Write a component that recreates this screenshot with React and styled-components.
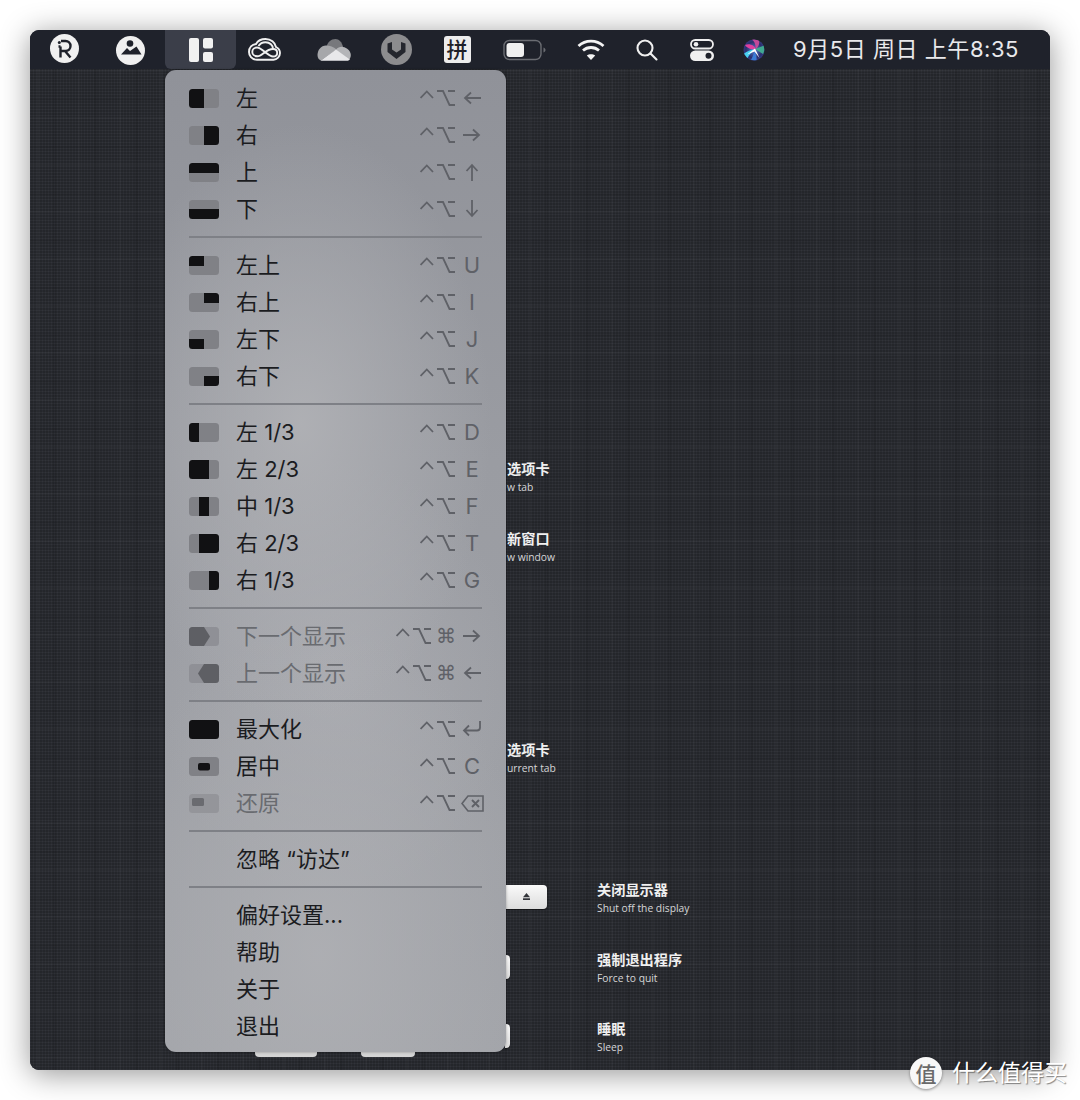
import styled, { createGlobalStyle } from "styled-components";

const GlobalStyle = createGlobalStyle`
  html, body { margin: 0; padding: 0; background: #fff; }
  * { box-sizing: border-box; }
`;

const UI_FONT = `Inter, "Noto Sans CJK SC", "Noto Sans", sans-serif`;

const Page = styled.div`
  position: relative;
  width: 1080px;
  height: 1100px;
  padding: 30px;
  background: #fff;
  font-family: ${UI_FONT};
  overflow: hidden;
`;

const Desktop = styled.div`
  display: flex;
  flex-direction: column;
  width: 1020px;
  height: 1040px;
  border-radius: 9px;
  background: #1f222b;
  box-shadow: 0 4px 30px rgba(0, 0, 0, 0.42);
`;

const Bar = styled.header`
  position: relative;
  z-index: 2;
  display: flex;
  align-items: center;
  flex: 0 0 39px;
  background: #1f222b;
  border-radius: 9px 9px 0 0;
`;

const Slot = styled.div`
  position: relative;
  display: flex;
  align-items: center;
  justify-content: center;
  flex: 0 0 ${(p) => p.$w}px;
  height: 39px;
  padding-right: ${(p) => p.$shift || 0}px;
  padding-top: ${(p) => (p.$dy > 0 ? p.$dy * 2 : 0)}px;
  padding-bottom: ${(p) => (p.$dy < 0 ? -p.$dy * 2 : 0)}px;
  ${(p) => p.$active && "background: #3b3e49; border-radius: 0 0 6px 6px;"}
`;

const Clock = styled.div`
  margin-left: 27px;
  font-size: 22px;
  line-height: 39px;
  letter-spacing: 0.55px;
  color: #e9e9ec;
  white-space: nowrap;
`;

const PinyinBadge = styled.div`
  display: flex;
  align-items: center;
  justify-content: center;
  width: 27px;
  height: 27px;
  border-radius: 3px;
  background: #ededed;
  color: #1e2027;
  font-size: 21px;
  font-weight: 500;
  line-height: 27px;
`;

const Menu = styled.nav`
  position: absolute;
  top: 40px;
  left: 0;
  width: 341px;
  height: 982px;
  padding-top: 9.5px;
  border-radius: 11px;
  background:
    radial-gradient(ellipse 190px 300px at 40% 36%, rgba(178, 179, 183, 0.85), rgba(178, 179, 183, 0) 100%),
    radial-gradient(ellipse 220px 330px at 45% 90%, rgba(176, 177, 181, 0.8), rgba(176, 177, 181, 0) 100%),
    radial-gradient(ellipse 180px 220px at 50% 62%, rgba(174, 175, 180, 0.7), rgba(174, 175, 180, 0) 100%),
    linear-gradient(180deg, #909299 0%, #9a9ca2 40%, #a2a4a9 100%);
  box-shadow: 0 0 3px rgba(0, 0, 0, 0.35);
`;

const Row = styled.div`
  display: flex;
  align-items: center;
  height: 37px;
  padding: 0 23px 0 24px;
  color: ${(p) => (p.$off ? "#696b70" : "#1b1c1f")};
  font-size: 22px;
`;

const IconCell = styled.div`
  display: flex;
  flex: 0 0 30px;
  margin-right: 17px;
`;

const Label = styled.span`
  flex: 1;
  line-height: 37px;
  white-space: nowrap;
`;

const Shortcut = styled.div`
  display: flex;
  align-items: center;
  color: #5f6167;
`;

const ModIcon = styled.svg`
  display: block;
  margin-right: ${(p) => (p.$cmd ? 5 : 3)}px;
`;

const CmdMark = styled.span`
  margin-right: 2px;
  font-family: "DejaVu Sans", sans-serif;
  font-size: 20px;
  line-height: 37px;
`;

const KeyCap = styled.span`
  display: flex;
  align-items: center;
  justify-content: center;
  width: 28px;
  height: 37px;
  margin-right: -3px;
  font-size: 22px;
  line-height: 37px;
`;

const Separator = styled.hr`
  height: 2px;
  margin: 8.5px 24px;
  border: 0;
  background: #7e8086;
`;

const WinSvg = styled.svg`
  display: block;
  width: 30px;
  height: 19px;
  border-radius: 3.5px;
  background: ${(p) => p.$bg};
`;

const Sheet = styled.main`
  display: flex;
  flex: 1;
  flex-direction: column;
  padding-top: 391px;
  border-radius: 0 0 9px 9px;
  background-color: #2a2c32;
  background-image:
    repeating-linear-gradient(90deg, transparent 0 7px, rgba(255, 255, 255, 0.02) 7px 9px, transparent 9px 23px, rgba(0, 0, 0, 0.07) 23px 26px, transparent 26px 41px),
    repeating-linear-gradient(0deg, transparent 0 11px, rgba(255, 255, 255, 0.018) 11px 13px, transparent 13px 29px, rgba(0, 0, 0, 0.06) 29px 31px, transparent 31px 47px),
    repeating-linear-gradient(0deg, rgba(255, 255, 255, 0.02) 0 1px, rgba(0, 0, 0, 0.08) 1px 3px),
    repeating-linear-gradient(90deg, rgba(255, 255, 255, 0.015) 0 1px, rgba(0, 0, 0, 0.08) 1px 3px);
`;

const Hint = styled.div`
  display: flex;
  align-items: center;
  margin-top: ${(p) => p.$top || 0}px;
  padding-left: 475px;
`;

const KeySlot = styled.div`
  flex: 0 0 92px;
`;

const FnKey = styled.div`
  display: flex;
  align-items: center;
  justify-content: center;
  width: ${(p) => p.$w}px;
  height: 24px;
  margin-bottom: 5px;
  border-radius: 0 4px 4px 0;
  background: linear-gradient(180deg, #fafafa, #dcdcdc);
  box-shadow: 0 1px 1px rgba(0, 0, 0, 0.5);
`;

const HintText = styled.div`
  padding-left: ${(p) => p.$inset || 0}px;
  color: #f0f0f0;
`;

const HintTitle = styled.div`
  font-size: 14.2px;
  font-weight: 700;
  line-height: 18px;
  white-space: nowrap;
`;

const HintSub = styled.div`
  font-family: "Open Sans", sans-serif;
  font-size: 10.3px;
  line-height: 18px;
  color: #d6d6d8;
  white-space: nowrap;
`;

const TipRow = styled.div`
  display: flex;
  gap: 44px;
  margin-top: -4px;
  padding-left: 225px;
`;

const KeyTip = styled.div`
  width: ${(p) => p.$w}px;
  height: 5px;
  border-radius: 0 0 4px 4px;
  background: #d4d4d4;
`;

const Watermark = styled.div`
  position: absolute;
  left: 910px;
  top: 1057px;
  display: flex;
  align-items: center;
  gap: 10px;
`;

const WatermarkBadge = styled.div`
  display: flex;
  align-items: center;
  justify-content: center;
  width: 32px;
  height: 32px;
  border-radius: 50%;
  background: #f8f8f8;
  color: #6a6a6a;
  font-size: 21px;
  font-weight: 500;
  box-shadow: 0 1px 3px rgba(0, 0, 0, 0.4);
`;

const WatermarkText = styled.span`
  color: #fff;
  font-size: 23px;
  line-height: 32px;
  white-space: nowrap;
  text-shadow: 1px 1px 1px rgba(0, 0, 0, 0.45);
`;

/* ---- menu bar icons ---- */

const RectanglyIcon = () => (
  <svg width="29" height="29" viewBox="0 0 29 29">
    <circle cx="14.5" cy="14.5" r="14.5" fill="#f0f0f0" />
    <path d="M10.5 12.500V23.500M8.500 12.500H10.500M11 7H15.500A5 5 0 0 1 15.500 17H10.500M15 17L20.500 23.500" fill="none" stroke="#1f222b" strokeWidth="2.400" />
    <circle cx="9.300" cy="8.500" r="1.500" fill="#1f222b" />
  </svg>
);

const PhotoIcon = () => (
  <svg width="29" height="29" viewBox="0 0 29 29">
    <circle cx="14.5" cy="14.5" r="14.5" fill="#f0f0f0" />
    <circle cx="14" cy="7.500" r="3.300" fill="#1f222b" />
    <path d="M5 18.500L11 12L14 15L20.500 10.500L25.500 18.500Z" fill="#1f222b" />
  </svg>
);

const LayoutIcon = () => (
  <svg width="24" height="24" viewBox="0 0 24 24">
    <rect x="0" y="0" width="10" height="24" rx="2" fill="#f1f1f1" />
    <rect x="14" y="0" width="10" height="10.5" rx="2" fill="#f1f1f1" />
    <rect x="14" y="14" width="10" height="10" rx="2" fill="#f1f1f1" />
  </svg>
);

const CloudLoopIcon = () => (
  <svg width="33" height="23" viewBox="0 0 33 23" fill="none" stroke="#f0f0f0" strokeWidth="1.900">
    <path d="M9 21.800C3.500 21.800 1 17.500 1 14C1 9.500 4 6.500 8 6C10 2.500 13.500 1 17.500 1C23 1 27 4.500 28 9C31 10.500 32 13 32 15C32 18.500 29 21.800 25.500 21.800Z" />
    <path d="M9.500 18.300C14 18.300 18 11 25 11C28 11 29.200 13 29.200 15C29.200 17 27.500 18.500 25 18.500C20 18.500 14 9.500 9 9.500C6.500 9.500 4.300 11.500 4.300 14C4.300 16.500 6.500 18.300 9.500 18.300Z" />
    <path d="M10.500 8C12 5.500 14.500 4.200 17.500 4.200C22 4.200 25 7.500 25 11" />
  </svg>
);

const OneDriveIcon = () => (
  <svg width="34" height="22" viewBox="0 0 34 22">
    <path d="M9 9C10.500 3 14 0 18.500 0C22 0 25 3 26 8L19 12Z" fill="#77787c" />
    <path d="M0.500 16C0.500 11 4 6.500 9 6.500C13 6.500 16.500 8 19.500 10.500L4 21.500C2 21 0.500 19 0.500 16Z" fill="#a6a7aa" />
    <path d="M19 10.500C21 8.500 23.500 7.500 26 8C30 8.500 33.800 12 33.800 16C33.800 18 33 19.800 32 21L25 18Z" fill="#b4b5b8" />
    <path d="M3.500 21.800L19 10.500L32.800 20.500C32 21.500 31 21.800 30 21.800Z" fill="#e8e8ea" />
  </svg>
);

const ShieldIcon = () => (
  <svg width="31" height="31" viewBox="0 0 31 31">
    <circle cx="15.500" cy="15.500" r="15.500" fill="#8c8c8e" />
    <path d="M6.500 9.500L11 8V15.500L15.500 18.500L20 15.500V8L24.500 9.500V18L15.500 25L6.500 18Z" fill="#24262d" />
  </svg>
);

const BatteryIcon = () => (
  <svg width="43" height="22" viewBox="0 0 43 22">
    <rect x="1" y="1.500" width="37" height="19" rx="5.500" fill="none" stroke="#6a6c72" strokeWidth="1.400" />
    <rect x="3.500" y="4" width="17.500" height="14" rx="3" fill="#f0f0f0" />
    <path d="M40.500 8.500C42 9.300 42.500 10 42.500 11C42.500 12 42 12.700 40.500 13.500Z" fill="#6a6c72" />
  </svg>
);

const WifiIcon = () => (
  <svg width="28" height="21" viewBox="0 0 28 21" fill="none" stroke="#f4f4f4" strokeWidth="2.800">
    <path d="M1.500 7C8.500 0.500 19.500 0.500 26.500 7" />
    <path d="M6 11.500C10.500 7.500 17.500 7.500 22 11.500" />
    <path d="M14 21L9.800 16.500C12 14.800 16 14.800 18.200 16.500Z" fill="#f4f4f4" stroke="none" />
  </svg>
);

const SearchIcon = () => (
  <svg width="22" height="22" viewBox="0 0 22 22" fill="none" stroke="#f0f0f0" strokeWidth="2.100" strokeLinecap="round">
    <circle cx="9" cy="9" r="7.500" />
    <path d="M14.500 14.500L20.500 20.500" />
  </svg>
);

const ControlIcon = () => (
  <svg width="24" height="22" viewBox="0 0 24 22">
    <rect x="1" y="1" width="22" height="8.500" rx="4.250" fill="none" stroke="#f0f0f0" strokeWidth="1.800" />
    <circle cx="6" cy="5.250" r="2.300" fill="#f0f0f0" />
    <rect x="0" y="11.500" width="24" height="10.500" rx="5.250" fill="#f0f0f0" />
    <circle cx="18.500" cy="16.750" r="3" fill="#1f222b" />
  </svg>
);

const SiriIcon = () => (
  <svg width="22" height="22" viewBox="0 0 22 22">
    <defs>
      <radialGradient id="siriBase" cx="50%" cy="50%" r="55%">
        <stop offset="0%" stopColor="#5d7fd0" />
        <stop offset="70%" stopColor="#2b2f6e" />
        <stop offset="100%" stopColor="#3a3f8a" />
      </radialGradient>
      <filter id="siriSoft">
        <feGaussianBlur stdDeviation="0.6" />
      </filter>
      <clipPath id="siriClip">
        <circle cx="11" cy="11" r="10.500" />
      </clipPath>
    </defs>
    <circle cx="11" cy="11" r="10.500" fill="url(#siriBase)" />
    <g filter="url(#siriSoft)" clipPath="url(#siriClip)">
      <path d="M2 6C6 4 12 6 13 11C8 10 4 9.500 2 6Z" fill="#e0409f" />
      <path d="M8 0C12 2 13 7 12.500 11C15 8 17 5 16 1.500C14 0 10 -0.300 8 0Z" fill="#c2489a" />
      <path d="M0.500 15C5 11.500 9 10 13 10.500C9.500 12.500 6.500 15 4.500 19Z" fill="#46d0f0" />
      <path d="M12 10L21 6.500C22 9 21.500 12 20 15Z" fill="#3fa890" />
      <path d="M8 21C10 17 11 14 11.500 12C13 15 14 18 13.500 22Z" fill="#3b7bd6" />
      <path d="M4 15.500L12 9.500L16.500 19L11.500 12.500Z" fill="#ffffff" />
    </g>
  </svg>
);

const EjectIcon = () => (
  <svg width="7" height="7" viewBox="0 0 9 9" fill="#33353a">
    <path d="M4.500 0L9 5.500H0Z" />
    <rect y="6.800" width="9" height="2.200" />
  </svg>
);

/* ---- menu shortcut glyphs ---- */

const ControlOption = ({ cmd }) => (
  <ModIcon $cmd={cmd} width="35" height="18" viewBox="0 0 35 18" fill="none" stroke="#5f6167" strokeWidth="1.800">
    <path d="M0.600 9L6.800 2.500L13 9" />
    <path d="M17 2H23L29.500 16H35M28 2H35" />
  </ModIcon>
);

const arrowPaths = {
  left: "M18 9H2M8 3.500L2 9L8 14.500",
  right: "M0 9H16M10 3.500L16 9L10 14.500",
  up: "M9 18V2M3.500 8L9 2L14.500 8",
  down: "M9 0V16M3.500 10L9 16L14.500 10",
};

const Arrow = ({ dir }) => (
  <svg width="18" height="18" viewBox="0 0 18 18" fill="none" stroke="#5f6167" strokeWidth="1.800">
    <path d={arrowPaths[dir]} />
  </svg>
);

const ReturnGlyph = () => (
  <svg width="20" height="18" viewBox="0 0 20 18" fill="none" stroke="#5f6167" strokeWidth="1.800">
    <path d="M18 1V7.500C18 9.500 17 10.500 15 10.500H2M7 5.500L2 10.500L7 15.500" />
  </svg>
);

const DeleteGlyph = () => (
  <svg width="23" height="17" viewBox="0 0 23 17" fill="none" stroke="#5f6167" strokeWidth="1.600">
    <path d="M7 1H22V16H7L1 8.500Z" />
    <path d="M11 5L18 12M18 5L11 12" strokeWidth="1.900" />
  </svg>
);

const glyphs = {
  left: <Arrow dir="left" />,
  right: <Arrow dir="right" />,
  up: <Arrow dir="up" />,
  down: <Arrow dir="down" />,
  ret: <ReturnGlyph />,
  del: <DeleteGlyph />,
};

/* ---- window position icons: [x, y, w, h] of the dark part in a 30x19 box ---- */

const WinIcon = ({ part, tone = "#808186", fill = "#111113", rx = 0, children }) => (
  <WinSvg $bg={tone} viewBox="0 0 30 19">
    {part && <rect x={part[0]} y={part[1]} width={part[2]} height={part[3]} rx={rx} fill={fill} />}
    {children}
  </WinSvg>
);

const sections = [
  [
    { label: "左", part: [0, 0, 15, 19], key: "left" },
    { label: "右", part: [15, 0, 15, 19], key: "right" },
    { label: "上", part: [0, 0, 30, 10], key: "up" },
    { label: "下", part: [0, 9, 30, 10], key: "down" },
  ],
  [
    { label: "左上", part: [0, 0, 15, 10], key: "U" },
    { label: "右上", part: [15, 0, 15, 10], key: "I" },
    { label: "左下", part: [0, 9, 15, 10], key: "J" },
    { label: "右下", part: [15, 9, 15, 10], key: "K" },
  ],
  [
    { label: "左 1/3", part: [0, 0, 10, 19], key: "D" },
    { label: "左 2/3", part: [0, 0, 20, 19], key: "E" },
    { label: "中 1/3", part: [10, 0, 10, 19], key: "F" },
    { label: "右 2/3", part: [10, 0, 20, 19], key: "T" },
    { label: "右 1/3", part: [20, 0, 10, 19], key: "G" },
  ],
  [
    { label: "下一个显示", shape: "M0 0H15L21 9.500L15 19H0Z", key: "right", cmd: true, off: true },
    { label: "上一个显示", shape: "M30 0H15L9 9.500L15 19H30Z", key: "left", cmd: true, off: true },
  ],
  [
    { label: "最大化", part: [0, 0, 30, 19], key: "ret" },
    { label: "居中", part: [9, 6, 12, 7.500], rx: 2, key: "C" },
    { label: "还原", part: [3, 4, 12, 8], rx: 1.500, key: "del", off: true },
  ],
  [{ label: "忽略 “访达”" }],
  [{ label: "偏好设置..." }, { label: "帮助" }, { label: "关于" }, { label: "退出" }],
];

const MenuRow = ({ item }) => {
  const { label, part, shape, rx, key: shortcut, cmd, off } = item;
  let icon = null;
  if (shape) {
    icon = (
      <WinIcon tone="#8f9096">
        <path d={shape} fill="#5e5f64" />
      </WinIcon>
    );
  } else if (part) {
    icon = off ? <WinIcon part={part} rx={rx} tone="#94959a" fill="#6a6b70" /> : <WinIcon part={part} rx={rx} />;
  }
  return (
    <Row $off={off}>
      <IconCell>{icon}</IconCell>
      <Label>{label}</Label>
      {shortcut && (
        <Shortcut>
          <ControlOption cmd={cmd} />
          {cmd && <CmdMark>⌘</CmdMark>}
          <KeyCap>{glyphs[shortcut] || shortcut}</KeyCap>
        </Shortcut>
      )}
    </Row>
  );
};

const trayItems = [
  { w: 68, dy: -1, icon: <RectanglyIcon /> },
  { w: 67, shift: 3, dy: 1, icon: <PhotoIcon /> },
];

const trayRest = [
  { w: 56, icon: <CloudLoopIcon /> },
  { w: 84, icon: <OneDriveIcon /> },
  { w: 40, icon: <ShieldIcon /> },
  { w: 82, icon: <PinyinBadge>拼</PinyinBadge> },
  { w: 52, icon: <BatteryIcon /> },
  { w: 82, icon: <WifiIcon /> },
  { w: 30, icon: <SearchIcon /> },
  { w: 80, icon: <ControlIcon /> },
  { w: 24, icon: <SiriIcon /> },
];

export default function App() {
  return (
    <Page>
      <GlobalStyle />
      <Desktop>
        <Bar>
          {trayItems.map((t, i) => (
            <Slot key={i} $w={t.w} $shift={t.shift} $dy={t.dy}>{t.icon}</Slot>
          ))}
          <Slot $w={71} $active>
            <LayoutIcon />
            <Menu>
              {sections.map((rows, i) => (
                <div key={i}>
                  {i > 0 && <Separator />}
                  {rows.map((item) => (
                    <MenuRow key={item.label} item={item} />
                  ))}
                </div>
              ))}
            </Menu>
          </Slot>
          {trayRest.map((t, i) => (
            <Slot key={i} $w={t.w}>{t.icon}</Slot>
          ))}
          <Clock>9月5日 周日 上午8:35</Clock>
        </Bar>
        <Sheet>
          <Hint>
            <HintText $inset={2}>
              <HintTitle>选项卡</HintTitle>
              <HintSub>w tab</HintSub>
            </HintText>
          </Hint>
          <Hint $top={34}>
            <HintText $inset={2}>
              <HintTitle>新窗口</HintTitle>
              <HintSub>w window</HintSub>
            </HintText>
          </Hint>
          <Hint $top={175}>
            <HintText $inset={2}>
              <HintTitle>选项卡</HintTitle>
              <HintSub>urrent tab</HintSub>
            </HintText>
          </Hint>
          <Hint $top={104}>
            <KeySlot>
              <FnKey $w={42}>
                <EjectIcon />
              </FnKey>
            </KeySlot>
            <HintText>
              <HintTitle>关闭显示器</HintTitle>
              <HintSub>Shut off the display</HintSub>
            </HintText>
          </Hint>
          <Hint $top={34}>
            <KeySlot>
              <FnKey $w={5} />
            </KeySlot>
            <HintText>
              <HintTitle>强制退出程序</HintTitle>
              <HintSub>Force to quit</HintSub>
            </HintText>
          </Hint>
          <Hint $top={33}>
            <KeySlot>
              <FnKey $w={5} />
            </KeySlot>
            <HintText>
              <HintTitle>睡眠</HintTitle>
              <HintSub>Sleep</HintSub>
            </HintText>
          </Hint>
          <TipRow>
            <KeyTip $w={62} />
            <KeyTip $w={54} />
          </TipRow>
        </Sheet>
      </Desktop>
      <Watermark>
        <WatermarkBadge>值</WatermarkBadge>
        <WatermarkText>什么值得买</WatermarkText>
      </Watermark>
    </Page>
  );
}
